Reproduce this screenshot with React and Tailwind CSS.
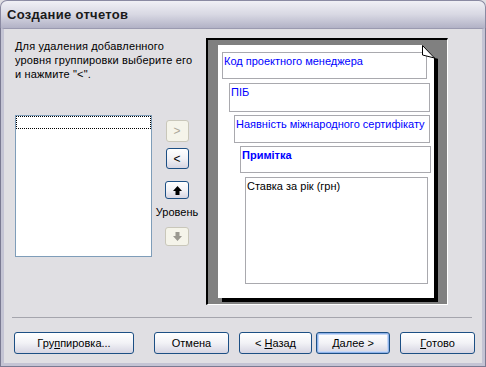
import React from 'react';

function XpButton({ children, className = '', isDefault = false, disabled = false }) {
  const look = disabled
    ? 'border-[#c9c7ba] bg-[#f5f4ea] text-[#aca899]'
    : 'border-[#1c4f84] bg-gradient-to-b from-white via-[#f2f2f6] to-[#d6d5e2] text-black';
  return (
    <div
      className={`flex items-center justify-center rounded-[3px] border text-[11px] leading-none ${look} ${
        isDefault ? 'shadow-[inset_0_0_0_1px_#8fb3ea,inset_0_0_0_2px_#c6d8f6]' : ''
      } ${className}`}
    >
      {children}
    </div>
  );
}

function Field({ className = '', children }) {
  return <div className={`border border-[#a9a9ae] px-[1px] pt-[2px] text-[11px] leading-[13px] ${className}`}>{children}</div>;
}

export default function App() {
  return (
    <div className="w-[486px] h-[367px] bg-[#e0dfe3] [font-family:'Liberation_Sans',Arial,sans-serif] flex flex-col">
      {/* title bar */}
      <div className="h-[28px] shrink-0 rounded-t-[7px] border border-b-0 border-[#8a8aa2] bg-gradient-to-b from-[#f0f0f5] via-[#d8d8e3] to-[#b2b2c6] flex items-center pl-[6px]">
        <span className="text-[13px] font-bold text-[#1a1a1a] tracking-[0.3px]">Создание отчетов</span>
      </div>

      {/* window frame */}
      <div className="flex-1 border-x border-b border-[#7a7a92]">
        <div className="h-full border-x-[3px] border-b-[3px] border-t border-[#c4c4d4] border-t-[#9a9ab0] bg-[#e0dfe3] flex flex-col">
          {/* top area */}
          <div className="flex items-start pt-[9px]">
            {/* left column */}
            <div className="ml-[11px] w-[137px] flex flex-col">
              <p className="mt-[1px] text-[11px] leading-[14px] tracking-[0.15px] text-black whitespace-nowrap">
                Для удаления добавленного
                <br />
                уровня группировки выберите его
                <br />
                и нажмите "&lt;".
              </p>
              <div className="mt-[34px] h-[142px] border border-[#7f9db9] bg-white">
                <div className="h-[13px] border border-dotted border-black" />
              </div>
            </div>

            {/* level buttons */}
            <div className="ml-[3px] w-[44px] flex flex-col items-center">
              <XpButton disabled className="mt-[82px] h-[22px] w-[23px] text-[12px]">&gt;</XpButton>
              <XpButton className="mt-[6px] h-[21px] w-[23px] text-[12px]">&lt;</XpButton>
              <XpButton className="mt-[12px] h-[18px] w-[24px]">
                <svg width="9" height="9" viewBox="0 0 9 9">
                  <path d="M4.5 0 L9 5 L6.5 5 L6.5 9 L2.5 9 L2.5 5 L0 5 Z" fill="#000" />
                </svg>
              </XpButton>
              <span className="mt-[6px] h-[14px] text-[11px] leading-[14px] text-black">Уровень</span>
              <XpButton disabled className="mt-[8px] h-[19px] w-[24px]">
                <svg width="9" height="9" viewBox="0 0 9 9">
                  <path d="M4.5 9 L9 4 L6.5 4 L6.5 0 L2.5 0 L2.5 4 L0 4 Z" fill="#9a9890" />
                </svg>
              </XpButton>
            </div>

            {/* preview */}
            <div className="ml-[7px] w-[242px] h-[267px] border-t-2 border-l-2 border-t-black border-l-black border-r border-b border-r-white border-b-white bg-[#808080] pl-[10px] pt-[5px]">
              <div className="relative w-[216px] h-[253px] bg-white shadow-[4px_4px_0_#000] flex flex-col">
                <svg className="absolute left-[204px] top-0" width="17" height="14" viewBox="0 0 17 14">
                  <polygon points="0,0 17,0 17,14 12.5,13" fill="#808080" />
                  <polygon points="0.5,0.5 0.5,10 12.5,13" fill="#fff" stroke="#000" strokeWidth="1" />
                </svg>
                <Field className="ml-[4px] mt-[7px] w-[205px] h-[27px] text-[#0000ff]">Код проектного менеджера</Field>
                <Field className="ml-[11px] mt-[4px] w-[201px] h-[29px] text-[#0000ff]">ПІБ</Field>
                <Field className="ml-[16px] mt-[3px] w-[196px] h-[28px] text-[#0000ff] whitespace-nowrap">
                  Наявність міжнародного сертифікату
                </Field>
                <Field className="ml-[22px] mt-[3px] w-[191px] h-[27px] text-[#0000ff] font-bold">Примітка</Field>
                <Field className="ml-[27px] mt-[4px] w-[183px] h-[107px] text-black">Ставка за рік (грн)</Field>
              </div>
            </div>
          </div>

          {/* separator */}
          <div className="ml-[8px] mt-[12px] w-[460px] h-px bg-[#a5a5ad]" />

          {/* bottom buttons */}
          <div className="ml-[10px] mt-[14px] flex items-center">
            <XpButton className="w-[120px] h-[22px]">
              Гру<span className="underline">п</span>пировка...
            </XpButton>
            <XpButton className="ml-[20px] w-[75px] h-[22px]">Отмена</XpButton>
            <XpButton className="ml-[10px] w-[73px] h-[22px]">
              &lt; <span className="underline ml-[3px]">Н</span>азад
            </XpButton>
            <XpButton isDefault className="ml-[4px] w-[74px] h-[22px]">
              <span className="underline">Д</span>алее&nbsp;&gt;
            </XpButton>
            <XpButton className="ml-[10px] w-[75px] h-[22px]">
              <span className="underline">Г</span>отово
            </XpButton>
          </div>
        </div>
      </div>
    </div>
  );
}
